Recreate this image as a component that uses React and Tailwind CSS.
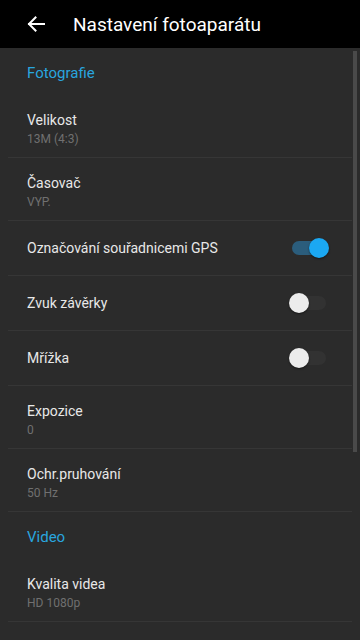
import React, { useState } from 'react';

const items = [
  { type: 'section', label: 'Fotografie' },
  { type: 'value', label: 'Velikost', value: '13M (4:3)' },
  { type: 'value', label: 'Časovač', value: 'VYP.' },
  { type: 'toggle', key: 'gps', label: 'Označování souřadnicemi GPS' },
  { type: 'toggle', key: 'shutter', label: 'Zvuk závěrky' },
  { type: 'toggle', key: 'grid', label: 'Mřížka' },
  { type: 'value', label: 'Expozice', value: '0' },
  { type: 'value', label: 'Ochr.pruhování', value: '50 Hz' },
  { type: 'section', label: 'Video' },
  { type: 'value', label: 'Kvalita videa', value: 'HD 1080p' },
];

function Switch({ on, onClick }) {
  return (
    <button onClick={onClick} className="relative w-[40px] h-[20px] shrink-0">
      <span
        className={`absolute left-[3px] top-[3px] w-[34px] h-[14px] rounded-full ${
          on ? 'bg-[#2b5d7c]' : 'bg-[#323232]'
        }`}
      />
      <span
        className={`absolute top-0 w-[20px] h-[20px] rounded-full shadow-[0_1px_2px_rgba(0,0,0,0.5)] ${
          on ? 'left-[20px] bg-[#1ba8f2]' : 'left-0 bg-[#ececec]'
        }`}
      />
    </button>
  );
}

export default function App() {
  const [toggles, setToggles] = useState({ gps: true, shutter: false, grid: false });

  const flip = (key) => setToggles((t) => ({ ...t, [key]: !t[key] }));

  return (
    <div
      className="w-[360px] h-[640px] overflow-hidden bg-[#2b2b2b] flex flex-col"
      style={{ fontFamily: 'Roboto, "Noto Sans", sans-serif' }}
    >
      {/* toolbar */}
      <div className="h-12 shrink-0 bg-black flex items-center">
        <svg width="18" height="16" viewBox="0 0 18 16" className="ml-[27px]">
          <path
            d="M17 8H2M8.5 1.5 2 8l6.5 6.5"
            fill="none"
            stroke="#fff"
            strokeWidth="2"
            strokeLinecap="square"
          />
        </svg>
        <h1 className="ml-[28px] text-[19px] text-white leading-none">Nastavení fotoaparátu</h1>
      </div>

      <div className="relative flex-1">
        {items.map((item, i) => {
          if (item.type === 'section') {
            return (
              <div key={i} className="h-[47px] pl-[27px] pt-[15px]">
                <span className="block text-[15px] leading-[20px] text-[#29a5df]">{item.label}</span>
              </div>
            );
          }
          if (item.type === 'toggle') {
            return (
              <div key={i} className="ml-2 mr-2 h-[55px] border-b border-[#363636] flex items-center justify-between pl-[19px] pr-[23px]">
                <span className="text-[14px] text-[#e8e8e8]">{item.label}</span>
                <Switch on={toggles[item.key]} onClick={() => flip(item.key)} />
              </div>
            );
          }
          return (
            <div key={i} className="ml-2 mr-2 h-[63px] border-b border-[#363636] pl-[19px] pt-[15px]">
              <div className="text-[14px] leading-[20px] text-[#e8e8e8]">{item.label}</div>
              <div className="text-[12px] leading-[16px] mt-[1px] text-[#707070]">{item.value}</div>
            </div>
          );
        })}

        {/* scrollbar */}
        <div className="absolute right-[3px] top-[3px] w-[4px] h-[401px] bg-[#4a4a4a]" />
      </div>
    </div>
  );
}
